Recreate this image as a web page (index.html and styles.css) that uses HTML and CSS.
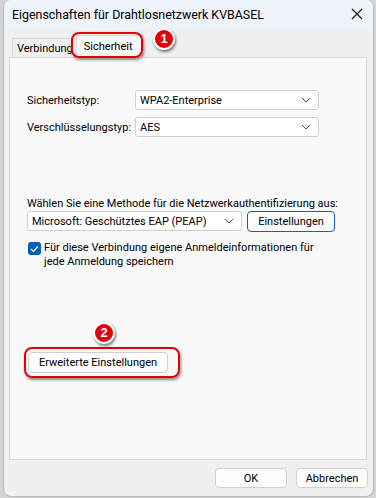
FILE: index.html
```html
<!DOCTYPE html>
<html lang="de">
<head>
  <meta charset="UTF-8" />
  <meta name="viewport" content="width=device-width, initial-scale=1.0" />
  <title>Eigenschaften für Drahtlosnetzwerk KVBASEL</title>
  <link rel="stylesheet" href="styles.css">
</head>
<body>

  <div class="window">
    <div class="titlebar">
      <span class="title">Eigenschaften für Drahtlosnetzwerk KVBASEL</span>
      <svg class="close" width="12" height="12" viewBox="0 0 12 12">
        <path d="M1 1 L11 11 M11 1 L1 11" stroke="#1a1a1a" stroke-width="1.1" fill="none" />
      </svg>
    </div>

    <div class="body">
      <div class="tabs">
        <div class="tab">Verbindung</div>
        <div class="tab active">Sicherheit</div>
      </div>

      <div class="panel">
        <div class="field">
          <span class="label">Sicherheitstyp:</span>
          <div class="select short">
            <span>WPA2-Enterprise</span>
            <svg width="10" height="6" viewBox="0 0 10 6"><path d="M1 1 L5 5 L9 1" stroke="#555" fill="none" /></svg>
          </div>
        </div>
        <div class="field">
          <span class="label">Verschlüsselungstyp:</span>
          <div class="select short">
            <span>AES</span>
            <svg width="10" height="6" viewBox="0 0 10 6"><path d="M1 1 L5 5 L9 1" stroke="#555" fill="none" /></svg>
          </div>
        </div>

        <p class="method-label">Wählen Sie eine Methode für die Netzwerkauthentifizierung aus:</p>
        <div class="method">
          <div class="select wide">
            <span>Microsoft: Geschütztes EAP (PEAP)</span>
            <svg width="10" height="6" viewBox="0 0 10 6"><path d="M1 1 L5 5 L9 1" stroke="#555" fill="none" /></svg>
          </div>
          <button class="btn primary">Einstellungen</button>
        </div>

        <div class="check">
          <span class="box">
            <svg width="9" height="8" viewBox="0 0 9 8"><path d="M1 4 L3.5 6.5 L8 1.5" stroke="#fff" stroke-width="1.2" fill="none" /></svg>
          </span>
          <span class="check-text">Für diese Verbindung eigene Anmeldeinformationen für<br>jede Anmeldung speichern</span>
        </div>

        <button class="btn advanced">Erweiterte Einstellungen</button>
      </div>

      <div class="actions">
        <button class="btn">OK</button>
        <button class="btn">Abbrechen</button>
      </div>
    </div>

    <!-- Markierungen -->
    <span class="mark mark-tab"></span>
    <span class="mark mark-advanced"></span>
    <span class="badge badge-1">1</span>
    <span class="badge badge-2">2</span>
  </div>

</body>
</html>
```

FILE: styles.css
```css
body {
  margin: 0;
  background: #d4d4d4;
  font-family: Roboto, 'Liberation Sans', sans-serif;
  font-size: 11px;
  color: #000;
}

.window {
  position: relative;
  margin-left: 3px;
  width: 369px;
  height: 496px;
  background: #f0f0f0;
  border: 1px solid #b9b9b9;
  border-top: none;
  border-radius: 8px;
  overflow: hidden;
}

.titlebar {
  display: flex;
  align-items: center;
  justify-content: space-between;
  height: 30px;
  background: #eef2f9;
  padding: 0 10px 0 8px;
}

.title {
  font-size: 12.4px;
  margin-top: -2px;
}

.close {
  margin-top: -2px;
}

.body {
  padding: 5px 5px 0 5px;
}

.tabs {
  display: flex;
  align-items: flex-end;
  padding-left: 3px;
  height: 22px;
  position: relative;
  z-index: 1;
}

.tab {
  height: 19px;
  line-height: 19px;
  padding: 0 4px;
  border: 1px solid #d9d9d9;
  border-bottom: none;
  background: #f0f0f0;
  box-sizing: border-box;
}

.tab.active {
  height: 23px;
  line-height: 22px;
  margin-left: -2px;
  margin-bottom: -1px;
  padding: 0 9px 0 7px;
  background: #f9f9f9;
}

.panel {
  height: 403px;
  box-sizing: border-box;
  margin-right: 1px;
  background: #f9f9f9;
  border: 1px solid #d9d9d9;
  padding: 32px 0 0 17px;
}

.field {
  display: flex;
  align-items: center;
  margin-bottom: 7px;
}

.label {
  width: 108px;
}

.select {
  display: flex;
  align-items: center;
  justify-content: space-between;
  height: 20px;
  box-sizing: border-box;
  background: #fff;
  border: 1px solid #d0d0d0;
  border-radius: 3px;
  padding: 0 7px 0 4px;
}

.select.short {
  width: 184px;
}

.select.wide {
  width: 215px;
}

.method-label {
  margin: 59px 0 0;
  line-height: 15px;
}

.method {
  display: flex;
  gap: 5px;
}

.btn {
  font-family: inherit;
  font-size: 11px;
  color: #000;
  height: 21px;
  box-sizing: border-box;
  background: #fdfdfd;
  border: 1px solid #d0d0d0;
  border-radius: 4px;
  padding: 0;
}

.btn.primary {
  width: 88px;
  border-color: #0067c0;
}

.check {
  display: flex;
  gap: 3px;
  margin-top: 9px;
  margin-left: 1px;
}

.box {
  display: flex;
  align-items: center;
  justify-content: center;
  width: 13px;
  height: 13px;
  margin-top: 1px;
  background: #005fb8;
  border-radius: 3px;
}

.check-text {
  line-height: 14px;
}

.btn.advanced {
  display: block;
  width: 140px;
  margin: 83px 0 0 1px;
}

.actions {
  display: flex;
  justify-content: flex-end;
  gap: 9px;
  padding-top: 8px;
}

.actions .btn {
  width: 72px;
  height: 20px;
}

.mark {
  position: absolute;
  z-index: 2;
  border: 2.5px solid #e5000a;
  border-radius: 8px;
  box-shadow: 1px 2px 3px rgba(0, 0, 0, 0.45);
}

.mark-tab {
  left: 67px;
  top: 32px;
  width: 68px;
  height: 22px;
}

.mark-advanced {
  left: 20px;
  top: 347px;
  width: 152px;
  height: 27px;
}

.badge {
  position: absolute;
  z-index: 3;
  width: 18px;
  height: 18px;
  line-height: 18px;
  text-align: center;
  border: 2px solid #fff;
  border-radius: 50%;
  background: #e3000b;
  color: #fff;
  font-family: 'Liberation Sans', sans-serif;
  font-weight: bold;
  font-size: 13px;
  box-shadow: 1px 2px 3px rgba(0, 0, 0, 0.5);
}

.badge-1 {
  left: 149px;
  top: 28px;
}

.badge-2 {
  left: 89px;
  top: 322px;
}
```
